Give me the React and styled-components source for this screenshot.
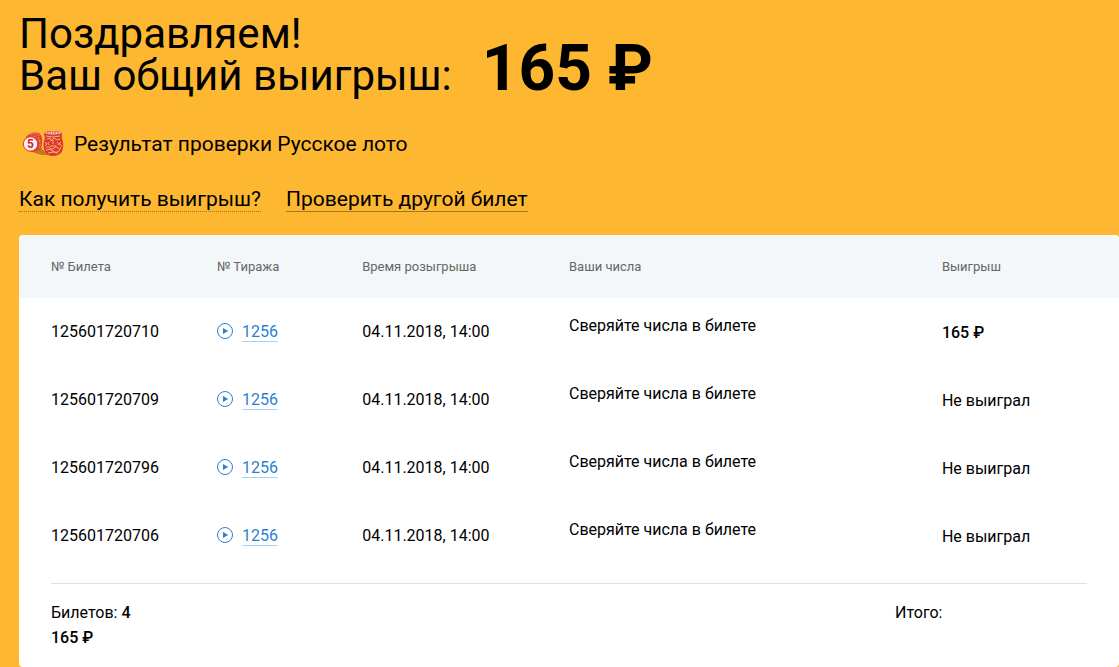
import React from "react";
import styled, { createGlobalStyle } from "styled-components";

const GlobalStyle = createGlobalStyle`
  * {
    box-sizing: border-box;
  }
  body {
    margin: 0;
    background-color: #fdb731;
    color: #000;
    font-family: Roboto, "Liberation Sans", sans-serif;
    font-size: 16px;
  }
`;

const Page = styled.main`
  padding: 13px 0 0 19px;
`;

const Congrats = styled.header`
  display: flex;
  align-items: flex-end;
  gap: 30px;
`;

const Title = styled.h1`
  margin: 0;
  font-size: 42px;
  font-weight: 400;
  line-height: 42px;
`;

const Amount = styled.strong`
  font-size: 64px;
  font-weight: 700;
  line-height: 56px;
`;

const Lottery = styled.div`
  display: flex;
  align-items: center;
  gap: 10px;
  margin-top: 31px;
  padding-left: 3px;
  font-size: 21px;
  line-height: 32px;
`;

const Actions = styled.nav`
  display: flex;
  gap: 25px;
  margin-top: 28px;
`;

const ActionLink = styled.a`
  color: #000;
  font-size: 21px;
  line-height: 23px;
  text-decoration: none;
  border-bottom: 1px ${(props) => (props.$dotted ? "dotted" : "solid")} #a4751b;
`;

const Card = styled.section`
  margin-top: 23px;
  background-color: #fff;
  border-radius: 4px;
  overflow: hidden;
`;

const Table = styled.table`
  width: 100%;
  table-layout: fixed;
  border-collapse: collapse;
`;

const Col = styled.col`
  width: ${(props) => props.$width};
`;

const HeadCell = styled.th`
  height: 63px;
  padding: 0;
  background-color: #f3f7fa;
  color: #666;
  font-size: 13px;
  font-weight: 400;
  text-align: left;

  &:first-child {
    padding-left: 32px;
  }
`;

const Cell = styled.td`
  height: 68px;
  padding: 0;
  line-height: 20px;

  &:first-child {
    padding-left: 32px;
  }
`;

const NumbersCell = styled(Cell)`
  padding-bottom: 12px;
`;

const PrizeCell = styled(Cell)`
  padding-top: 2px;
  font-weight: ${(props) => (props.$won ? 500 : 400)};
`;

const Draw = styled.div`
  display: flex;
  align-items: flex-start;
  gap: 9px;
`;

const DrawLink = styled.a`
  color: #2c7fd0;
  line-height: 18px;
  text-decoration: none;
  border-bottom: 1px solid #a9d2f5;
`;

const Summary = styled.footer`
  display: flex;
  margin: 13px 32px 0;
  padding: 16px 0 17px;
  border-top: 1px solid #e0e0e0;
  line-height: 25px;
`;

const Count = styled.div`
  flex: 1;
`;

const Total = styled.div`
  flex: 0 0 192px;
`;

const Bold = styled.b`
  font-weight: 500;
`;

const KegsIcon = () => (
  <svg width="42" height="28" viewBox="0 0 42 28" aria-hidden="true">
    <path d="M8 21 L19 18 L26 25 L20 25 L13 23Z" fill="#c07a1c" />
    <path d="M4 7 Q9 1 17 3 Q21 6 20 13 Q20 17 18 20 L11 22 L8 22 Q1 15 4 7Z" fill="#dc4430" />
    <path
      d="M8 5 Q14 2 18 6 M11 6 Q17 7 17.5 13 M15 5 Q20 11 17 19"
      fill="none"
      stroke="#f39a70"
      strokeWidth="0.9"
      strokeDasharray="1.5 1"
    />
    <circle cx="8.5" cy="14" r="7.2" fill="#fff4f2" stroke="#e0392f" strokeWidth="1" />
    <text
      x="8.5"
      y="18"
      textAnchor="middle"
      fontFamily="Roboto, sans-serif"
      fontWeight="700"
      fontSize="12"
      fill="#d21f2b"
    >
      5
    </text>
    <path
      d="M22 4 Q22 1 31 1 Q40 1 40 4 Q39 8 41 12 Q42 19 39 23 Q36 26 31 26 Q25 26 23 22 Q20 15 23 8Z"
      fill="#dc3a2b"
    />
    <ellipse cx="31" cy="3" rx="8" ry="1.5" fill="#f8d5cd" />
    <path d="M25 3 H37" stroke="#b32649" strokeWidth="1" strokeDasharray="1.5 1" />
    <path
      d="M24 6 Q31 8 38 6 M25 9 l3 -1 l1 3 l3 -3 l3 2 l3 -1 M27 12 q-2 2 0 3 M31 10 v4 M35 12 q2 1 1 3 M23 12 l2 2 l-2 2 M39 12 l-2 2 l3 2 M24 18 q2 -3 4 0 t4 0 t4 0 t3 -1 M24 20 Q28 18 31 21 T38 20 M26 23 Q31 21 36 23 M28 16 h6"
      fill="none"
      stroke="#f8b07e"
      strokeWidth="1"
    />
  </svg>
);

const PlayIcon = () => (
  <svg width="16" height="16" viewBox="0 0 16 16" aria-hidden="true">
    <circle cx="8" cy="8" r="7.5" fill="none" stroke="#2c7fd0" />
    <path d="M6 5 L11.2 8 L6 11Z" fill="#2c7fd0" />
  </svg>
);

const columns = [
  { title: "№ Билета", width: "18%" },
  { title: "№ Тиража", width: "13.2%" },
  { title: "Время розыгрыша", width: "18.8%" },
  { title: "Ваши числа", width: "33.9%" },
  { title: "Выигрыш", width: "16.1%" },
];

const tickets = [
  { number: "125601720710", prize: "165 ₽" },
  { number: "125601720709" },
  { number: "125601720796" },
  { number: "125601720706" },
];

const App = () => {
  return (
    <>
      <GlobalStyle />
      <Page>
        <Congrats>
          <Title>
            Поздравляем!
            <br />
            Ваш общий выигрыш:
          </Title>
          <Amount>165 ₽</Amount>
        </Congrats>
        <Lottery>
          <KegsIcon />
          Результат проверки Русское лото
        </Lottery>
        <Actions>
          <ActionLink href="#prize" $dotted>
            Как получить выигрыш?
          </ActionLink>
          <ActionLink href="#check">Проверить другой билет</ActionLink>
        </Actions>
        <Card>
          <Table>
            <colgroup>
              {columns.map((column) => (
                <Col key={column.title} $width={column.width} />
              ))}
            </colgroup>
            <thead>
              <tr>
                {columns.map((column) => (
                  <HeadCell key={column.title} scope="col">
                    {column.title}
                  </HeadCell>
                ))}
              </tr>
            </thead>
            <tbody>
              {tickets.map((ticket) => (
                <tr key={ticket.number}>
                  <Cell>{ticket.number}</Cell>
                  <Cell>
                    <Draw>
                      <PlayIcon />
                      <DrawLink href="#draw-1256">1256</DrawLink>
                    </Draw>
                  </Cell>
                  <Cell>04.11.2018, 14:00</Cell>
                  <NumbersCell>Сверяйте числа в билете</NumbersCell>
                  <PrizeCell $won={Boolean(ticket.prize)}>
                    {ticket.prize || "Не выиграл"}
                  </PrizeCell>
                </tr>
              ))}
            </tbody>
          </Table>
          <Summary>
            <Count>
              Билетов: <Bold>{tickets.length}</Bold>
              <br />
              <Bold>165 ₽</Bold>
            </Count>
            <Total>Итого:</Total>
          </Summary>
        </Card>
      </Page>
    </>
  );
};

export default App;
